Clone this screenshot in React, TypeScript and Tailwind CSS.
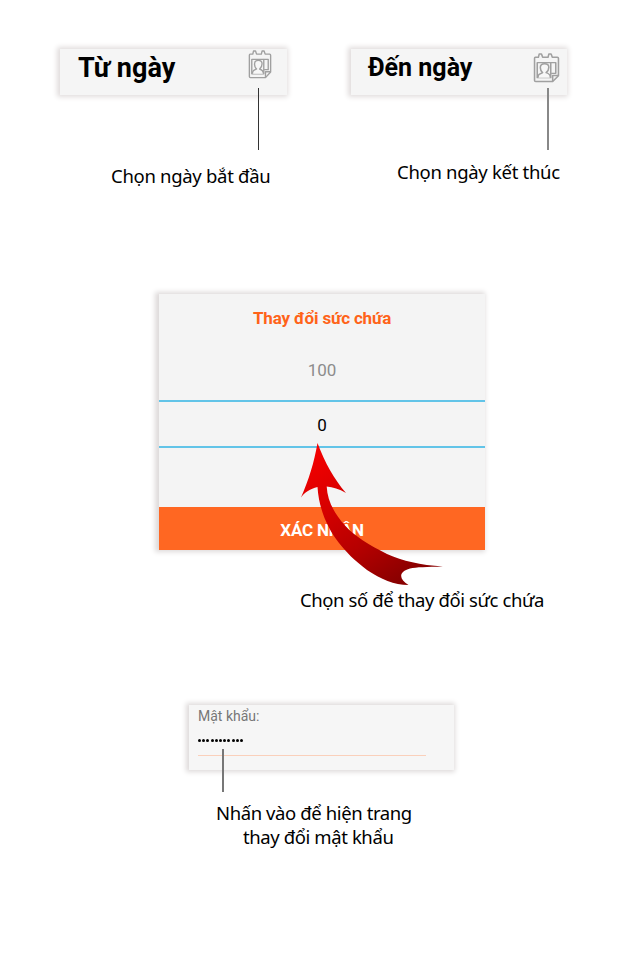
import React from "react";

function CalendarIcon({ className }: { className: string }) {
  return (
    <svg className={className} viewBox="27 16 70 84" preserveAspectRatio="none" fill="none" stroke="#a0a0a0" strokeWidth="4" strokeLinejoin="round">
      <path d="M33 28H41L43 19H49L52 28H66L68 19H74L77 28H90Q93 28 93 31V80L78 96H34Q31 96 31 93V31Q31 28 33 28Z" />
      <path d="M38 43H73V85H38Z" />
      <path d="M73 43H86V73H74" />
      <path d="M92 79H78V95" />
      <path fill="#f7f7f7" d="M40 85C40 76 43 75 52 71C47 66 46 62 46 57C46 49 50 46 57 46C64 46 68 50 68 56C68 62 66 67 61 71C70 74 72 77 72 85" />
    </svg>
  );
}

function Caption({ children, className = "tracking-[-0.4px]" }: { children: React.ReactNode; className?: string }) {
  return <p className={`whitespace-nowrap font-['Noto_Sans',sans-serif] text-[18.5px] leading-6 text-black ${className}`}>{children}</p>;
}

function Arrow() {
  return (
    <svg className="absolute left-[142px] top-[149px] h-[143px] w-[143px]" viewBox="301 443 143 143">
      <defs>
        <linearGradient id="arrow" x1="0" y1="0" x2="0.65" y2="1">
          <stop offset="0" stopColor="#fb0000" />
          <stop offset="0.35" stopColor="#dc0000" />
          <stop offset="0.7" stopColor="#b60000" />
          <stop offset="1" stopColor="#890000" />
        </linearGradient>
      </defs>
      <path fill="url(#arrow)" d="M317.500 443C325 463 334 479 346 493C339 489 333 487 326.700 486.500C327.500 501 334 513 345 525.500C354 535.500 369 545 387 554C403 561 420 565 443 566.500C427 567 416 567 410 568.500C398 572 399 579 408.500 585C394 585 381 579 367 570C354 560 346 552 339 543C328 529 319 510 317.500 487C310 489 305 492 301 497.500C309 479 314 463 317.500 443Z" />
    </svg>
  );
}

export default function App() {
  return (
    <main className="h-[960px] w-[643px] overflow-hidden bg-white pt-[49px] font-[Roboto,sans-serif]">
      <section className="flex h-[245px] items-start pl-[60px]">
        <div className="w-[227px]">
          <div className="relative flex h-[46px] justify-between bg-[#f5f5f5] pl-[18px] pr-[15px] shadow-[-1px_0_5px_2px_#e1dddd]">
            <h2 className="whitespace-nowrap text-[27px] font-bold leading-[38px] text-black">Từ ngày</h2>
            <CalendarIcon className="mt-[1px] h-[29px] w-[24px]" />
            <div className="absolute left-[198px] top-[39px] h-[62px] w-px bg-[#333]" />
          </div>
          <Caption className="mt-[69px] pl-[51px] tracking-[-0.3px]">Chọn ngày bắt đầu</Caption>
        </div>
        <div className="ml-[64px] w-[216px]">
          <div className="relative flex h-[46px] justify-between bg-[#f5f5f5] pl-[17px] pr-[7px] shadow-[-1px_0_5px_2px_#e1dddd]">
            <h2 className="whitespace-nowrap text-[25px] font-bold leading-[37px] text-black">Đến ngày</h2>
            <CalendarIcon className="mt-[4px] h-[30px] w-[27px]" />
            <div className="absolute left-[196px] top-[39px] h-[62px] w-[2px] bg-[#888]" />
          </div>
          <Caption className="mt-[65px] pl-[46px] tracking-[-0.3px]">Chọn ngày kết thúc</Caption>
        </div>
      </section>

      <section className="relative ml-[159px] h-[411px] w-[326px]">
        <div className="h-[256px] bg-[#f4f4f4] text-center shadow-[-2px_0_5px_2px_#dedada]">
          <h3 className="h-[48px] text-[17px] font-bold leading-[48px] tracking-[-0.15px] text-[#ff6319]">Thay đổi sức chứa</h3>
          <div className="h-[58px] text-[17px] leading-[57px] text-[#8c8c8c]">100</div>
          <div className="h-[48px] border-y-2 border-[#62c4e8] text-[17px] leading-[47px] text-black">0</div>
          <div className="h-[59px]" />
          <div className="h-[43px] bg-[#ff6722] text-[17px] font-bold leading-[46px] tracking-[-0.2px] text-white">XÁC NHẬN</div>
        </div>
        <Caption className="mt-[38px] pl-[141px] tracking-[-0.4px]">Chọn số để thay đổi sức chứa</Caption>
        <Arrow />
      </section>

      <section className="relative ml-[189px] w-[265px]">
        <div className="h-[65px] bg-[#f6f6f6] px-[9px] shadow-[-1px_0_5px_2px_#dedada]">
          <label className="block h-[22px] text-[14px] leading-[22px] text-[#777]">Mật khẩu:</label>
          <div className="flex h-[29px] w-[228px] items-center gap-[1.2px] border-b border-[#fad0bb] pb-[2px]">
            {Array.from({ length: 11 }, (_, i) => <i key={i} className="h-[3px] w-[3px] rounded-full bg-black" />)}
          </div>
        </div>
        <div className="absolute left-[33px] top-[44px] h-[43px] w-[2px] bg-[#777]" />
        <Caption className="mt-[31px] pl-[27px] tracking-[-0.4px]">Nhấn vào để hiện trang</Caption>
        <Caption className="pl-[54px] tracking-[-0.4px]">thay đổi mật khẩu</Caption>
      </section>
    </main>
  );
}
